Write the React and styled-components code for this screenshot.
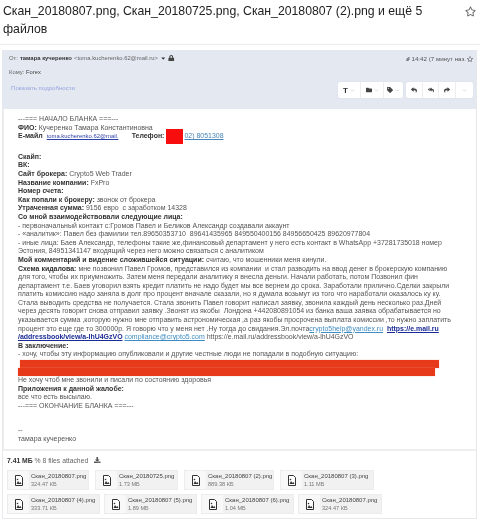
import React from 'react';
import styled, { createGlobalStyle } from 'styled-components';
import { FaLock, FaFolder, FaTag, FaReply, FaReplyAll, FaShare, FaDownload, FaRegStar, FaCaretDown, FaPaperclip } from 'react-icons/fa';
import { LuChevronDown } from 'react-icons/lu';

const GlobalStyle = createGlobalStyle`
  html, body {
    margin: 0;
    padding: 0;
    background: #fff;
    height: 522px;
    overflow: hidden;
    font-family: "Liberation Sans", Arial, sans-serif;
  }
`;

const Page = styled.div`
  width: 480px;
  height: 522px;
  overflow: hidden;
  filter: blur(0.4px);
`;

const TitleBar = styled.div`
  display: flex;
  justify-content: space-between;
  height: 45px;
  padding: 3px 4px 0 3px;
  box-sizing: border-box;
  border-bottom: 1px solid #ececec;
`;

const Title = styled.h1`
  margin: 0;
  width: 440px;
  font-size: 12.25px;
  font-weight: 400;
  line-height: 17.5px;
  color: #222;
`;

const TitleStar = styled.span`
  color: #666;
  font-size: 11px;
  padding-top: 3px;
`;

const Card = styled.div`
  margin: 5px 3px 0 2px;
  height: 469px;
  box-sizing: border-box;
  border: 1px solid #e6e8ec;
  border-top: 0;
`;

const Header = styled.div`
  background: #e3e8f1;
  height: 59px;
  padding: 4px 3px 0 6px;
  box-sizing: border-box;
  font-size: 5.9px;
  color: #666;
`;

const HeaderRow = styled.div`
  display: flex;
  justify-content: space-between;
  align-items: ${p => (p.$center ? 'center' : 'flex-start')};
`;

const Sender = styled.div`
  display: flex;
  align-items: center;
  gap: 2px;
  line-height: 8px;
  b { color: #333; }
  svg { font-size: 6.5px; }
`;

const Time = styled.div`
  display: flex;
  align-items: center;
  gap: 1px;
  padding-top: 1px;
  line-height: 8px;
  color: #555;
  font-size: 6.2px;
`;

const ToLine = styled.div`
  line-height: 8px;
  margin-top: 5px;
  span { color: #444; font-size: 5.8px; }
`;

const ShowDetails = styled.span`
  color: #97a5e0;
  font-size: 6.1px;
  margin-left: 2px;
`;

const Toolbars = styled.div`
  display: flex;
  gap: 3px;
  margin-top: 6px;
`;

const ToolGroup = styled.div`
  display: flex;
  height: 16px;
  background: #fff;
  border-radius: 2px;
  box-shadow: 0 0 1px #ccd;
`;

const ToolButton = styled.div`
  display: flex;
  align-items: center;
  justify-content: center;
  gap: 2px;
  width: ${p => p.$w}px;
  color: #444;
  font-size: 6px;
  border-right: 1px solid #eee;
  &:last-child { border-right: 0; }
  svg.chev { color: #aaa; font-size: 5px; }
`;

const ToolLetter = styled.span`
  font-size: 8px;
  font-weight: 700;
  color: #333;
`;

const Body = styled.div`
  height: 342px;
  box-sizing: border-box;
  padding: 6px 0 0 14px;
  border-left: 1px solid #eee;
  border-bottom: 2px solid #eee;
  font-size: 6.98px;
  line-height: 8.6px;
  color: #555;
  white-space: pre;
  b { color: #333; font-weight: 700; }
`;

const Spacer = styled.div`
  height: ${p => p.$h}px;
`;

const PhoneLine = styled.div`
  display: flex;
  align-items: center;
  height: 8.6px;
  color: #333;
  font-weight: 700;
`;

const MailLink = styled.span`
  width: 85px;
  color: #2a3fa8;
  font-weight: 400;
  font-size: 5.9px;
  text-decoration: underline;
  margin-left: 4px;
`;

const RedMark = styled.span`
  flex: none;
  width: 17px;
  height: 15px;
  background: #f70d0d;
  margin: 0 1px 0 2px;
`;

const PhoneDigits = styled.span`
  color: #4a86b8;
  font-weight: 400;
  text-decoration: underline;
`;

const Link = styled.a`
  color: ${p => (p.$dark ? '#1a2a96' : '#3d8cc4')};
  font-weight: ${p => (p.$dark ? 700 : 400)};
  text-decoration: underline;
`;

const RedactedBlock = styled.div`
  height: 8px;
  width: ${p => p.$w}px;
  margin-left: ${p => p.$ml}px;
  margin-top: ${p => p.$mt || 0}px;
  background: #e63a1a;
  box-shadow: 0 0 1px #f2a08c;
`;

const Attachments = styled.div`
  padding: 4px 0 0 4px;
`;

const AttachInfo = styled.div`
  display: flex;
  align-items: center;
  gap: 6px;
  height: 10px;
  font-size: 6.8px;
  color: #666;
  b { color: #333; }
  svg { color: #555; font-size: 6.5px; }
`;

const FileGrid = styled.div`
  display: flex;
  flex-direction: column;
  gap: 4px;
  margin-top: 5px;
`;

const FileRow = styled.div`
  display: flex;
  gap: ${p => p.$gap}px;
`;

const FileCard = styled.div`
  display: flex;
  align-items: center;
  width: ${p => p.$w}px;
  height: 20px;
  background: #f1f1f1;
  border: 1px solid #ececec;
  box-sizing: border-box;
`;

const FileIconBox = styled.div`
  display: flex;
  align-items: center;
  justify-content: center;
  width: 21px;
  flex: none;
  background: #f8f8f8;
  height: 100%;
`;

const FileText = styled.div`
  padding-left: 2px;
  font-size: 6px;
  line-height: 8px;
  color: #444;
  white-space: nowrap;
  small { display: block; font-size: 5.6px; color: #777; }
`;

function PicFile() {
  return (
    <svg width="8" height="11" viewBox="0 0 8 11">
      <path d="M.5.5h5l2 2v8h-7z" fill="#fff" stroke="#333" />
      <path d="M1.5 9 3 6l1.5 2 1-1 1 2z" fill="#333" />
      <circle cx="2.5" cy="4.5" r=".8" fill="#333" />
    </svg>
  );
}

const files = [
  {
    gap: 6,
    items: [
      { name: 'Скан_20180807.png', size: '324.47 КБ', w: 82 },
      { name: 'Скан_20180725.png', size: '1.73 МБ', w: 83 },
      { name: 'Скан_20180807 (2).png', size: '889.38 КБ', w: 90 },
      { name: 'Скан_20180807 (3).png', size: '1.11 МБ', w: 94 },
    ],
  },
  {
    gap: 4,
    items: [
      { name: 'Скан_20180807 (4).png', size: '333.71 КБ', w: 93 },
      { name: 'Скан_20180807 (5).png', size: '1.89 МБ', w: 93 },
      { name: 'Скан_20180807 (6).png', size: '1.04 МБ', w: 93 },
      { name: 'Скан_20180807.png', size: '324.47 КБ', w: 84 },
    ],
  },
];

export default function App() {
  return (
    <Page>
      <GlobalStyle />
      <TitleBar>
        <Title>Скан_20180807.png, Скан_20180725.png, Скан_20180807 (2).png и ещё 5 файлов</Title>
        <TitleStar><FaRegStar /></TitleStar>
      </TitleBar>
      <Card>
        <Header>
          <HeaderRow>
            <Sender>
              <span>От:</span> <b>тамара кучеренко</b> <span>&lt;toma.kucherenko.62@mail.ru&gt;</span>
              <FaCaretDown color="#333" />
              <FaLock color="#444" />
            </Sender>
            <Time>
              <FaPaperclip size={4} /> 14:42 (7 минут наз. <FaRegStar size={6} />
            </Time>
          </HeaderRow>
          <ToLine>Кому: <span>Forex</span></ToLine>
          <HeaderRow $center>
            <ShowDetails>Показать подробности</ShowDetails>
            <Toolbars>
              <ToolGroup>
                <ToolButton $w={22}><ToolLetter>T</ToolLetter><LuChevronDown className="chev" /></ToolButton>
                <ToolButton $w={22}><FaFolder /><LuChevronDown className="chev" /></ToolButton>
                <ToolButton $w={19}><FaTag /><LuChevronDown className="chev" /></ToolButton>
              </ToolGroup>
              <ToolGroup>
                <ToolButton $w={16}><FaReply /></ToolButton>
                <ToolButton $w={15}><FaReplyAll /></ToolButton>
                <ToolButton $w={16}><FaShare /></ToolButton>
                <ToolButton $w={17}><LuChevronDown className="chev" /></ToolButton>
              </ToolGroup>
            </Toolbars>
          </HeaderRow>
        </Header>
        <Body>
          <div>---=== НАЧАЛО БЛАНКА ===---</div>
          <div><b>ФИО:</b> Кучеренко Тамара Константиновна</div>
          <PhoneLine>
            <span>Е-майл</span>
            <MailLink>toma.kucherenko.62@mail.</MailLink>
            <span>Телефон:</span>
            <RedMark />
            <PhoneDigits>02) 8051308</PhoneDigits>
          </PhoneLine>
          <Spacer $h={12} />
          <div><b>Скайп:</b></div>
          <div><b>ВК:</b></div>
          <div><b>Сайт брокера:</b> Crypto5 Web Trader</div>
          <div><b>Название компании:</b> FxPro</div>
          <div><b>Номер счета:</b></div>
          <div><b>Как попали к брокеру:</b> звонок от брокера</div>
          <div><b>Утраченная сумма:</b> 9156 евро  с заработком 14328</div>
          <div><b>Со мной взаимодействовали следующие лица:</b></div>
          <div>- первоначальный контакт с:Громов Павел и Беликов Александр создавали аккаунт</div>
          <div>- «аналитик»: Павел без фамилии тел.89650353710  89641435965 849550400156 84956650425 89620977804</div>
          <div>- иные лица: Баев Александр, телефоны такие же,финансовый департамент у него есть контакт в WhatsApp +37281735018 номер</div>
          <div>Эстония, 84951341147 входящий через него можно связаться с аналитиком</div>
          <div><b>Мой комментарий и видение сложившейся ситуации:</b> считаю, что мошенники меня кинули.</div>
          <div><b>Схема кидалова:</b> мне позвонил Павел Громов, представился из компании  и стал разводить на ввод денег в брокерскую компанию</div>
          <div>для того, чтобы их приумножить. Затем меня передали аналитику я внесла деньги. Начали работать, потом Позвонил фин</div>
          <div>департамент т.е. Баев уговорил взять кредит платить не надо будет мы все вернем до срока. Заработали прилично.Сделки закрыли</div>
          <div>платить комиссию надо заняла в долг про процент вначале сказали, но я думала возьмут из того что наработали оказалось ку ку.</div>
          <div>Стала выводить средства не получается. Стала звонить Павел говорит написал заявку, звонила каждый день несколько раз.Дней</div>
          <div>через десять говорит снова отправил заявку .Звонят из якобы  Лондона +442080891054 из банка ваша заявка обрабатывается но</div>
          <div>указывается сумма ,которую нужно мне отправить астрономическая ,а раз якобы просрочена выплата комиссии ,то нужно заплатить</div>
          <div>процент это еще где то 300000р. Я говорю что у меня нет .Ну тогда до свидания.Эл.почта<Link>crypto5help@yandex.ru</Link>  <Link $dark>https://e.mail.ru</Link></div>
          <div><Link $dark>/addressbook/view/a-lhU4GzVO</Link> <Link>compliance@crypto5.com</Link> https://e.mail.ru/addressbook/view/a-lhU4GzVO</div>
          <div><b>В заключение:</b></div>
          <div>- хочу, чтобы эту информацию опубликовали и другие честные люди не попадали в подобную ситуацию:</div>
          <RedactedBlock $w={419} $ml={2} $mt={1} />
          <RedactedBlock $w={417} $ml={0} />
          <div>Не хочу чтоб мне звонили и писали по состоянию здоровья</div>
          <div><b>Приложения к данной жалобе:</b></div>
          <div>все что есть высылаю.</div>
          <div>---=== ОКОНЧАНИЕ БЛАНКА ===---</div>
          <Spacer $h={16} />
          <div>--</div>
          <div>тамара кучеренко</div>
        </Body>
        <Attachments>
          <AttachInfo><span><b>7.41 МБ</b> % 8 files attached</span><FaDownload /></AttachInfo>
          <FileGrid>
            {files.map((row, i) => (
              <FileRow key={i} $gap={row.gap}>
                {row.items.map((f, j) => (
                  <FileCard key={j} $w={f.w}>
                    <FileIconBox><PicFile /></FileIconBox>
                    <FileText>{f.name}<small>{f.size}</small></FileText>
                  </FileCard>
                ))}
              </FileRow>
            ))}
          </FileGrid>
        </Attachments>
      </Card>
    </Page>
  );
}
